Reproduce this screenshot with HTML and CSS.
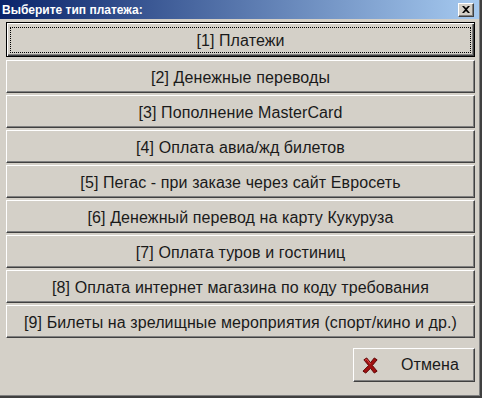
FILE: index.html
```html
<!doctype html>
<html>
<head>
	<meta charset="utf-8">
	<title>Выберите тип платежа</title>
	<link rel="stylesheet" href="styles.css">
</head>
<body>
	<div class="window">
		<div class="titlebar">
			<span class="title">Выберите тип платежа:</span>
			<span class="close">
				<svg width="8" height="7" viewBox="0 0 8 7"><path d="M0 0h2l2 2 2-2h2L5 3.5 8 7H6L4 5 2 7H0l3-3.5z" fill="#000"/></svg>
			</span>
		</div>
		<div class="content">
			<div class="list">
				<button class="btn first"><span class="focus">[1] Платежи</span></button>
				<button class="btn">[2] Денежные переводы</button>
				<button class="btn">[3] Пополнение MasterCard</button>
				<button class="btn">[4] Оплата авиа/жд билетов</button>
				<button class="btn">[5] Пегас - при заказе через сайт Евросеть</button>
				<button class="btn">[6] Денежный перевод на карту Кукуруза</button>
				<button class="btn">[7] Оплата туров и гостиниц</button>
				<button class="btn">[8] Оплата интернет магазина по коду требования</button>
				<button class="btn">[9] Билеты на зрелищные мероприятия (спорт/кино и др.)</button>
			</div>
			<div class="footer">
				<button class="btn cancel">
					<svg class="icon" width="17" height="17" viewBox="0 0 18 18">
						<path d="M2 3 L5 1 L9 6 L13 1 L16 3 L11 9 L16 15 L13 17 L9 12 L4 17 L1 15 L7 9 Z" fill="#a01010" stroke="#5a0000" stroke-width="1"/>
						<path d="M3 3.5 L5 2.5 L9 7.5" fill="none" stroke="#e05050" stroke-width="1"/>
					</svg>
					<span>Отмена</span>
				</button>
			</div>
		</div>
	</div>
</body>
</html>
```

FILE: styles.css
```css
html, body {
	margin: 0;
	padding: 0;
	background-color: #d4d0c8;
}

.window {
	width: 480px;
	height: 396px;
	background-color: #d4d0c8;
	border-right: 2px solid #404040;
	border-bottom: 2px solid #404040;
	box-shadow: inset -1px -1px 0 #808080;
	display: flex;
	flex-direction: column;
	font-family: "Liberation Sans", Arial, sans-serif;
}

.titlebar {
	height: 19px;
	margin-right: 1px;
	background: linear-gradient(to right, #0a246a, #a6caf0);
	display: flex;
	align-items: center;
	justify-content: space-between;
	padding: 0 3px 0 2px;
}

.title {
	color: #fff;
	font-weight: bold;
	font-size: 12px;
}

.close {
	width: 16px;
	height: 14px;
	box-sizing: border-box;
	background-color: #d4d0c8;
	border-top: 1px solid #fff;
	border-left: 1px solid #fff;
	border-right: 1px solid #404040;
	border-bottom: 1px solid #404040;
	box-shadow: inset -1px -1px 0 #808080;
	display: flex;
	align-items: center;
	justify-content: center;
	margin-right: 2px;
}

.content {
	flex: 1;
	padding: 3px 5px 0 6px;
	display: flex;
	flex-direction: column;
}

.list {
	display: flex;
	flex-direction: column;
	gap: 2px;
}

.btn {
	height: 33px;
	box-sizing: border-box;
	background-color: #d4d0c8;
	border-top: 1px solid #fff;
	border-left: 1px solid #fff;
	border-right: 1px solid #404040;
	border-bottom: 1px solid #404040;
	box-shadow: inset -1px -1px 0 #808080;
	font-family: "Liberation Sans", Arial, sans-serif;
	font-size: 16px;
	letter-spacing: 0.1px;
	color: #1a1a1a;
	padding: 2px 0 0 0;
	display: flex;
	align-items: center;
	justify-content: center;
}

.btn.first {
	height: 35px;
	margin-bottom: 1px;
	border: 1px solid #000;
	box-shadow: inset 1px 1px 0 #fff, inset -1px -1px 0 #404040, inset -2px -2px 0 #808080;
	padding: 4px 3px 3px 3px;
}

.focus {
	flex: 1;
	align-self: stretch;
	border: 1px dotted #000;
	padding-top: 2px;
	display: flex;
	align-items: center;
	justify-content: center;
}

.footer {
	display: flex;
	justify-content: flex-end;
	padding-top: 10px;
}

.cancel {
	width: 122px;
	height: 34px;
	justify-content: flex-start;
	padding: 0 0 0 8px;
	gap: 22px;
}

.icon {
	display: block;
}
```
